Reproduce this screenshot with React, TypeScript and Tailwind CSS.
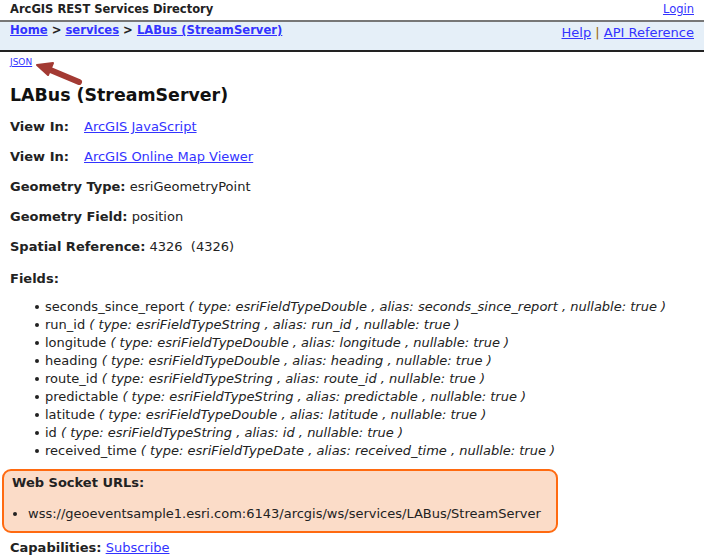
import React from 'react';

const FONT = { fontFamily: '"DejaVu Sans", Verdana, sans-serif' };

const FIELDS = [
  ['seconds_since_report', 'esriFieldTypeDouble', 'seconds_since_report'],
  ['run_id', 'esriFieldTypeString', 'run_id'],
  ['longitude', 'esriFieldTypeDouble', 'longitude'],
  ['heading', 'esriFieldTypeDouble', 'heading'],
  ['route_id', 'esriFieldTypeString', 'route_id'],
  ['predictable', 'esriFieldTypeString', 'predictable'],
  ['latitude', 'esriFieldTypeDouble', 'latitude'],
  ['id', 'esriFieldTypeString', 'id'],
  ['received_time', 'esriFieldTypeDate', 'received_time'],
];

function Link({ children, className = '' }: { children: React.ReactNode; className?: string }) {
  return <a href="#" className={`text-[#3333ff] underline ${className}`}>{children}</a>;
}

export default function App() {
  return (
    <div className="relative w-[704px] h-[556px] overflow-hidden bg-white text-[13px] text-[#222]" style={FONT}>
      <div className="flex h-[20px] items-center justify-between px-[10px] text-[11.5px]">
        <span className="font-bold text-[#222]">ArcGIS REST Services Directory</span>
        <Link className="text-[11.5px]">Login</Link>
      </div>
      <div className="flex h-[32px] justify-between border-t-2 border-b-2 border-t-[#777] border-b-[#222] bg-[#e5eff8] px-[10px] leading-[16px]">
        <div className="text-[11.6px] font-bold">
          <Link>Home</Link> &gt; <Link>services</Link> &gt; <Link>LABus (StreamServer)</Link>
        </div>
        <div className="pt-[3px]">
          <Link>Help</Link> <span className="text-[#996600]">|</span> <Link>API Reference</Link>
        </div>
      </div>

      <div className="px-[10px]">
        <div className="mt-[5px] text-[9px] leading-[10px]">
          <Link>JSON</Link>
        </div>
        <h1 className="mt-[16px] text-[17.4px] font-bold leading-[24px] text-[#111]">LABus (StreamServer)</h1>

        <div className="mt-[12px] flex flex-col gap-[14px] leading-[16px]">
          <div>
            <b className="inline-block w-[74px]">View In:</b>
            <Link>ArcGIS JavaScript</Link>
          </div>
          <div>
            <b className="inline-block w-[74px]">View In:</b>
            <Link>ArcGIS Online Map Viewer</Link>
          </div>
          <div>
            <b>Geometry Type:</b> esriGeometryPoint
          </div>
          <div>
            <b>Geometry Field:</b> position
          </div>
          <div>
            <b>Spatial Reference:</b> 4326&nbsp; (4326)
          </div>
          <div className="mt-[2px]">
            <b>Fields:</b>
          </div>
        </div>

        <ul className="mt-[11px] flex flex-col pl-[25px] leading-[18px]">
          {FIELDS.map(([name, type, alias]) => (
            <li key={name} className="flex items-center">
              <span className="mr-[6px] h-[4px] w-[4px] rounded-full bg-[#222]" />
              <span>
                {name}{' '}
                <i>
                  ( type: {type} , alias: {alias} , nullable: true )
                </i>
              </span>
            </li>
          ))}
        </ul>
      </div>

      <div className="mx-[2px] mt-[9px] w-[556px] rounded-[9px] border-2 border-[#ff6a10] bg-[#fbdcc8] px-[8px] pb-[9px] pt-[4px] leading-[16px]">
        <b>Web Socket URLs:</b>
        <div className="mt-[15px] flex items-center">
          <span className="ml-[1px] mr-[11px] h-[4px] w-[4px] rounded-full bg-[#222]" />
          wss://geoeventsample1.esri.com:6143/arcgis/ws/services/LABus/StreamServer
        </div>
      </div>

      <div className="mt-[7px] px-[10px] leading-[16px]">
        <b>Capabilities:</b> <Link>Subscribe</Link>
      </div>

      <svg className="absolute left-[34px] top-[60px]" width="50" height="28" viewBox="0 0 50 28">
        <path d="M45 22 L14 9" stroke="#a33a33" strokeWidth="6" strokeLinecap="round" />
        <path d="M3 5 L19 3 L14 15 Z" fill="#a33a33" stroke="#a33a33" strokeWidth="2" strokeLinejoin="round" />
      </svg>
    </div>
  );
}
